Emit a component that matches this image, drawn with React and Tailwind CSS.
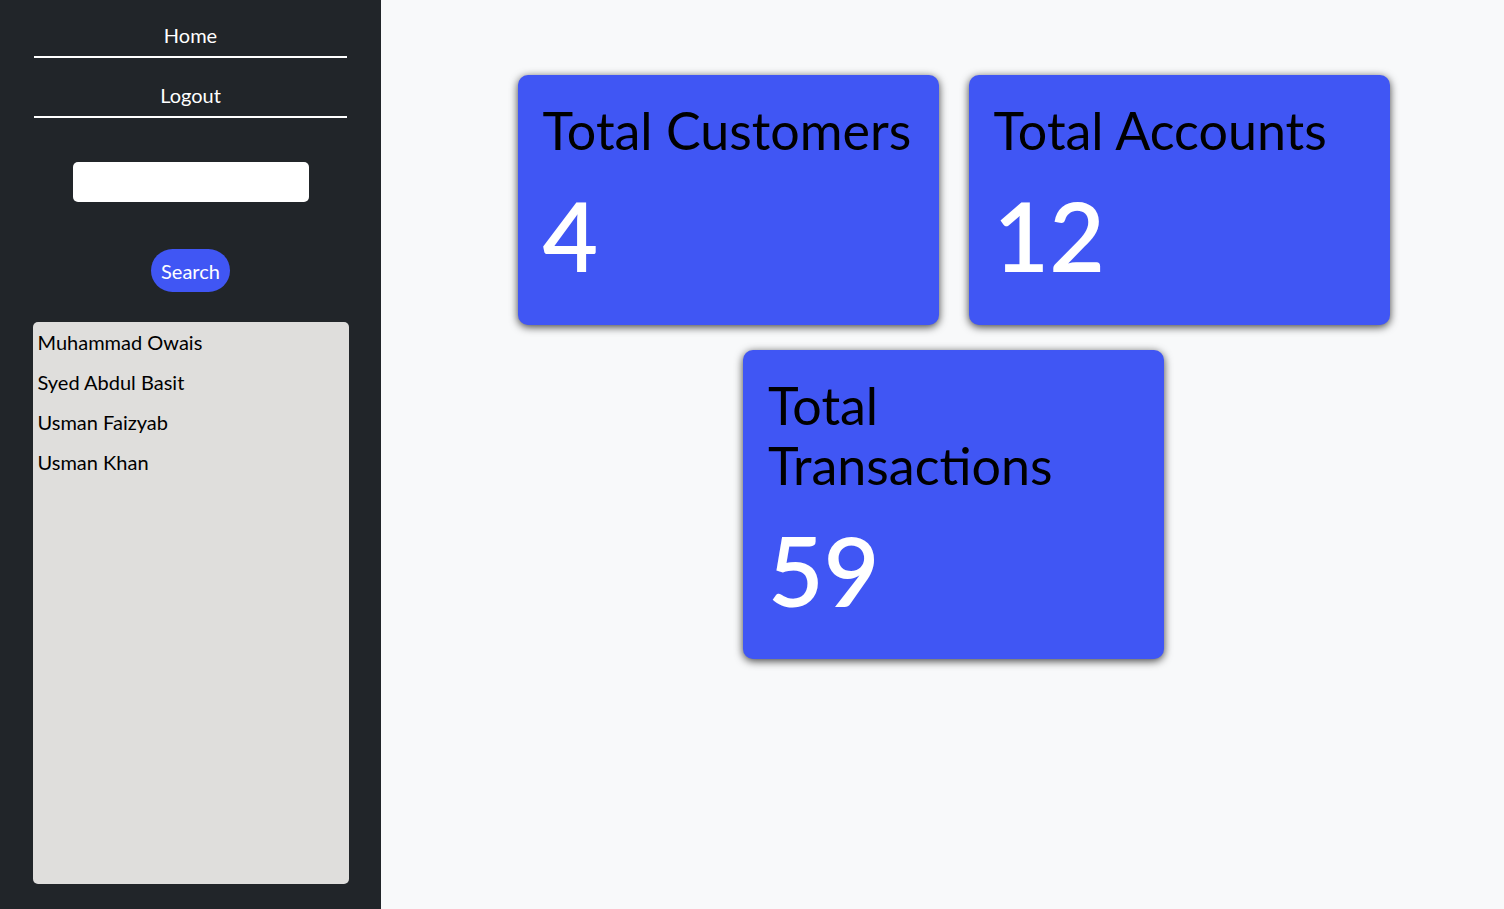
import React, { useState } from 'react';

const customers = ['Muhammad Owais', 'Syed Abdul Basit', 'Usman Faizyab', 'Usman Khan'];

const stats = [
  { title: 'Total Customers', value: 4 },
  { title: 'Total Accounts', value: 12 },
  { title: 'Total Transactions', value: 59 },
];

function StatCard({ title, value }) {
  return (
    <div className="w-[421px] rounded-[10px] bg-[#4056f4] px-[25px] pt-[25px] pb-[37px] shadow-[0_2px_9px_rgba(0,0,0,0.75)]">
      <h1 className="text-[52px] leading-[60px] text-black">{title}</h1>
      <h1 className="mt-[22px] text-[96px] leading-[1.1] font-semibold text-white">{value}</h1>
    </div>
  );
}

export default function App() {
  const [query, setQuery] = useState('');

  return (
    <div className="flex h-[909px] w-full font-['Lato','Noto_Sans',sans-serif] text-[#212529]">
      {/* sidebar */}
      <aside className="flex w-[381px] shrink-0 flex-col items-center bg-[#212529]">
        <a href="#" className="block w-[313px] border-b-2 border-white pt-[20px] pb-[6px] text-center text-[20px] leading-[30px] text-white">
          Home
        </a>
        <a href="#" className="mt-[2px] block w-[313px] border-b-2 border-white pt-[20px] pb-[6px] text-center text-[20px] leading-[30px] text-white">
          Logout
        </a>
        <input
          type="text"
          value={query}
          onChange={(e) => setQuery(e.target.value)}
          className="mt-[44px] h-[40px] w-[236px] rounded-[5px] bg-white px-3 text-black outline-none"
        />
        <button className="mt-[47px] h-[43px] rounded-full bg-[#4056f4] px-[10px] text-[20px] text-white">
          Search
        </button>
        <ul className="mt-[30px] h-[562px] w-[316px] rounded-[5px] bg-[#dfdedc] pl-[5px]">
          {customers.map((c) => (
            <li key={c} className="py-[5px] text-[20px] leading-[30px] text-black">
              {c}
            </li>
          ))}
        </ul>
      </aside>

      {/* main */}
      <main className="flex-1 bg-[#f8f9fa] pt-[75px] pl-[22px]">
        <div className="flex flex-wrap content-start justify-center gap-x-[30px] gap-y-[25px]">
          {stats.map((s) => (
            <StatCard key={s.title} title={s.title} value={s.value} />
          ))}
        </div>
      </main>
    </div>
  );
}
